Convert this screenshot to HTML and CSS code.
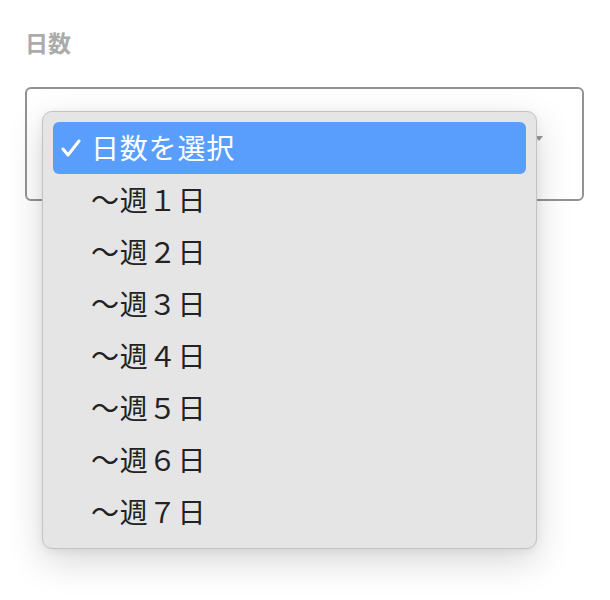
FILE: index.html
```html
<!DOCTYPE html>
<html lang="ja">
<head>
<meta charset="utf-8">
<link rel="stylesheet" href="styles.css">
</head>
<body>
<div class="field">
  <div class="label">日数</div>
  <div class="select">
    <span class="arrow"></span>
    <ul class="menu">
      <li class="item selected">
        <svg class="check" width="20" height="18" viewBox="0 0 20 18"><path d="M2 10 L7 16 L18 2" fill="none" stroke="#fff" stroke-width="3" stroke-linecap="round" stroke-linejoin="round"/></svg>
        <span>日数を選択</span>
      </li>
      <li class="item"><span>〜週１日</span></li>
      <li class="item"><span>〜週２日</span></li>
      <li class="item"><span>〜週３日</span></li>
      <li class="item"><span>〜週４日</span></li>
      <li class="item"><span>〜週５日</span></li>
      <li class="item"><span>〜週６日</span></li>
      <li class="item"><span>〜週７日</span></li>
    </ul>
  </div>
</div>
</body>
</html>
```
FILE: styles.css
```css
html, body {
  margin: 0;
  padding: 0;
  background: #fff;
}
body {
  font-family: "Noto Sans CJK JP", "Noto Sans", sans-serif;
  width: 610px;
  height: 600px;
  overflow: hidden;
}
.field {
  padding: 27px 26px 0 25px;
}
.label {
  font-size: 23px;
  font-weight: 700;
  color: #ababab;
  line-height: 30px;
  height: 30px;
}
.select {
  position: relative;
  margin-top: 30px;
  height: 110px;
  border: 2px solid #939393;
  border-radius: 6px;
  box-sizing: content-box;
}
.arrow {
  position: absolute;
  left: 508px;
  top: 47px;
  width: 0;
  height: 0;
  border-left: 4px solid transparent;
  border-right: 4px solid transparent;
  border-top: 5px solid #999;
}
.menu {
  position: absolute;
  left: 15px;
  top: 22px;
  width: 473px;
  margin: 0;
  padding: 10px 10px;
  list-style: none;
  background: #e5e5e5;
  border: 1px solid #c2c2c2;
  border-radius: 10px;
  box-shadow: 0 12px 36px rgba(0, 0, 0, 0.16), 0 2px 8px rgba(0, 0, 0, 0.06);
}
.item {
  position: relative;
  height: 52px;
  box-sizing: border-box;
  display: flex;
  align-items: center;
  padding-left: 38px;
  padding-bottom: 3px;
  font-size: 28px;
  letter-spacing: 0.8px;
  color: #222;
  border-radius: 6px;
}
.item.selected {
  background: #5a9efd;
  color: #fff;
}
.check {
  position: absolute;
  left: 8px;
  top: 17px;
}
```
